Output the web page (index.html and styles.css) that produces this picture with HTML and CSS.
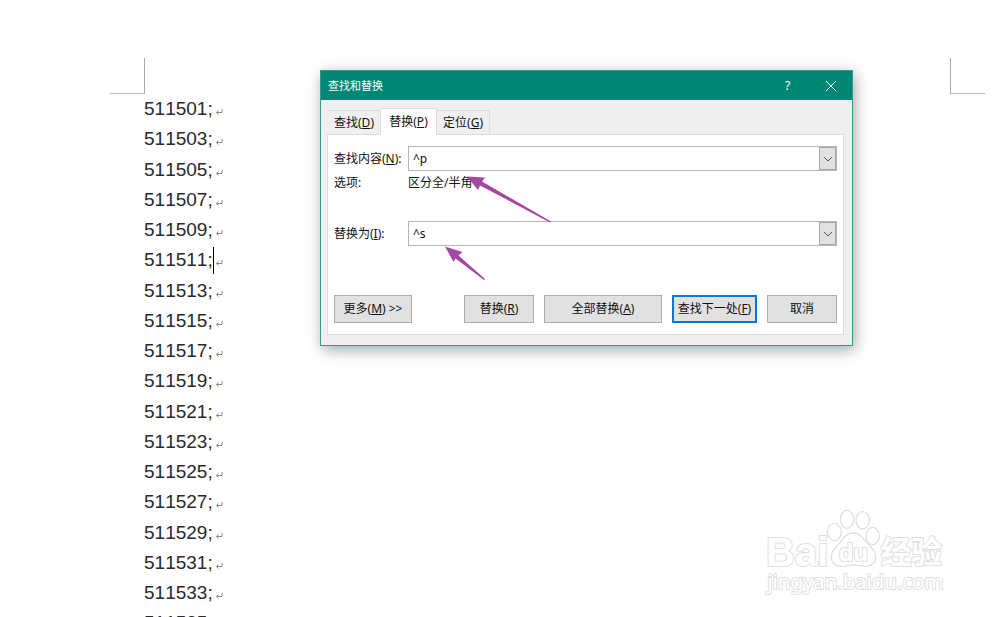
FILE: index.html
```html
<!DOCTYPE html>
<html lang="zh-CN">
<head>
    <meta charset="UTF-8">
    <meta name="viewport" content="width=device-width, initial-scale=1.0">
    <title>查找和替换</title>
    <link rel="stylesheet" href="styles.css">
</head>
<body>
    <main class="page">
        <div class="margins">
            <span class="corner corner-left"></span>
            <span class="corner corner-right"></span>
        </div>
        <div class="document" id="document"></div>
    </main>

    <section class="dialog" role="dialog" aria-labelledby="dialog-title">
        <header class="title-bar">
            <h1 id="dialog-title">查找和替换</h1>
            <button type="button" class="title-btn">?</button>
            <button type="button" class="title-btn" aria-label="关闭">
                <svg width="12" height="12" viewBox="0 0 12 12"><path d="M1 1l10 10M11 1L1 11"/></svg>
            </button>
        </header>
        <div class="dialog-body">
            <nav class="tabs">
                <button type="button" class="tab">查找(<u>D</u>)</button>
                <button type="button" class="tab active">替换(<u>P</u>)</button>
                <button type="button" class="tab">定位(<u>G</u>)</button>
            </nav>
            <form class="panel">
                <div class="row">
                    <label for="find">查找内容(<u>N</u>):</label>
                    <div class="combo">
                        <input type="text" id="find" value="^p">
                        <button type="button" aria-label="查找记录">
                            <svg width="10" height="6" viewBox="0 0 10 6"><path d="M1 1l4 4 4-4"/></svg>
                        </button>
                    </div>
                </div>
                <div class="row options">
                    <span>选项:</span>
                    <span>区分全/半角</span>
                </div>
                <div class="row">
                    <label for="replace">替换为(<u>I</u>):</label>
                    <div class="combo">
                        <input type="text" id="replace" value="^s">
                        <button type="button" aria-label="替换记录">
                            <svg width="10" height="6" viewBox="0 0 10 6"><path d="M1 1l4 4 4-4"/></svg>
                        </button>
                    </div>
                </div>
                <div class="actions">
                    <button type="button" class="btn btn-more">更多(<u>M</u>) &gt;&gt;</button>
                    <button type="button" class="btn">替换(<u>R</u>)</button>
                    <button type="button" class="btn btn-wide">全部替换(<u>A</u>)</button>
                    <button type="button" class="btn btn-default">查找下一处(<u>F</u>)</button>
                    <button type="button" class="btn">取消</button>
                </div>
            </form>
        </div>
        <svg class="arrows" width="533" height="275" viewBox="320 71 533 275">
            <path d="M467 176.500L485 177.500L482 181.500L551 221.500L550 222.500L480 185.500L478 190Z"/>
            <path d="M445 246.500L462.500 252L458.500 255.500L485 279L484 280L455.500 258.500L453.500 262Z"/>
        </svg>
    </section>

    <svg class="watermark" width="220" height="110" viewBox="0 0 660 330">
        <ellipse cx="253" cy="111" rx="21" ry="26"/>
        <ellipse cx="291" cy="73" rx="20" ry="27"/>
        <ellipse cx="338" cy="76" rx="20" ry="26"/>
        <ellipse cx="368" cy="123" rx="20" ry="26"/>
        <path d="M310 114C290 114 282 128 270 143C256 158 244 168 244 186C244 204 256 214 274 214C288 214 296 210 310 210C324 210 334 214 346 214C364 214 377 204 377 186C377 168 364 158 350 143C338 128 330 114 310 114Z"/>
        <text class="wm-bai" x="48" y="212">Bai</text>
        <text class="wm-du" x="266" y="198">du</text>
        <text class="wm-cn" x="392" y="203">经验</text>
        <text class="wm-url" x="52" y="283">jingyan.baidu.com</text>
    </svg>

    <script>
const doc = document.getElementById("document");

// Odd codes from 511501 on, the caret stands after 511511
for (let code = 511501; code <= 511535; code += 2) {
    const line = document.createElement("p");
    line.textContent = code + ";";
    if (code === 511511) {
        line.insertAdjacentHTML("beforeend", '<span class="caret"></span>');
    }
    line.insertAdjacentHTML("beforeend", '<svg class="mark" width="8" height="8" viewBox="0 0 8 8"><path d="M7 1v3.500H1.500M3.500 2.500L1.500 4.500L3.500 6.500"/></svg>');
    doc.appendChild(line);
}
    </script>
</body>
</html>
```
FILE: styles.css
```css
* {
    margin: 0;
    padding: 0;
    box-sizing: border-box;
}

body {
    position: relative;
    height: 100vh;
    overflow: hidden;
    background-color: #fff;
    font-family: "Noto Sans", "Noto Sans CJK SC", sans-serif;
    font-size: 12px;
    line-height: 16px;
    color: #111;
}

button,
input {
    font: inherit;
    color: inherit;
}

.page {
    padding: 58px 15px 0 110px;
}

.margins {
    display: flex;
    justify-content: space-between;
}

.corner {
    width: 35px;
    height: 36px;
    border-bottom: 1px solid #bbb;
}

.corner-left {
    border-right: 1px solid #aaa;
}

.corner-right {
    border-left: 1px solid #aaa;
}

.document {
    padding-left: 34px;
    font-family: "Liberation Sans", Arial, sans-serif;
    font-size: 19px;
    font-kerning: none;
    line-height: 30px;
    color: #2a2a2a;
}

.document p {
    display: flex;
    align-items: center;
    height: 30px;
}

.document p:nth-child(4n + 2) {
    margin-bottom: 1px;
}

.caret {
    width: 1px;
    height: 27px;
    margin-right: -1px;
    background-color: #000;
}

.mark {
    margin: 5px 0 0 2px;
    fill: none;
    stroke: #888;
}

.dialog {
    position: absolute;
    top: 70px;
    left: 320px;
    width: 533px;
    border: 1px solid #33998a;
    background-color: #efefef;
    box-shadow: 2px 4px 14px rgba(0, 0, 0, 0.35);
}

.title-bar {
    display: flex;
    align-items: center;
    height: 29px;
    padding-left: 7px;
    background-color: #008674;
    color: #fff;
}

.title-bar h1 {
    flex: 1;
    font-size: 11px;
    font-weight: normal;
}

.title-btn {
    width: 43px;
    height: 29px;
    border: none;
    background: none;
}

.title-btn svg {
    display: block;
    margin: 0 auto;
    fill: none;
    stroke: #fff;
}

.dialog-body {
    padding: 8px 8px 10px 6px;
}

.tabs {
    display: flex;
    align-items: flex-end;
    padding-left: 1px;
}

.tab {
    width: 53px;
    height: 24px;
    border: 1px solid #ddd;
    border-width: 1px 1px 0 0;
    background-color: #efefef;
}

.tab.active {
    width: 56px;
    height: 27px;
    margin-bottom: -1px;
    background-color: #fff;
}

.panel {
    padding: 11px 6px;
    border: 1px solid #ddd;
    background-color: #fff;
}

.row {
    display: grid;
    grid-template-columns: 74px 1fr;
    align-items: center;
}

.row label {
    white-space: nowrap;
}

.combo {
    display: flex;
    height: 25px;
    border: 1px solid #b4b4bb;
}

.combo input {
    flex: 1;
    min-width: 0;
    padding: 0 4px;
    border: none;
    outline: none;
}

.combo button {
    width: 17px;
    border: 1px solid #a8a8ad;
    background-color: #e1e1e1;
}

.combo svg {
    display: block;
    margin: 0 auto;
    fill: none;
    stroke: #555;
}

.options {
    height: 24px;
    margin-bottom: 26px;
}

.actions {
    display: flex;
    gap: 10px;
    padding-top: 49px;
}

.btn {
    width: 70px;
    height: 28px;
    border: 1px solid #adadad;
    background-color: #e1e1e1;
}

.btn-more {
    width: 78px;
    margin-right: auto;
}

.btn-wide {
    width: 118px;
}

.btn-default {
    width: 85px;
    border: 2px solid #0078d7;
}

.arrows {
    position: absolute;
    top: 0;
    left: -1px;
    fill: #a349a4;
    pointer-events: none;
}

.watermark {
    position: absolute;
    top: 495px;
    right: 30px;
    fill: #fff;
    stroke: #e0e0e0;
    stroke-width: 4px;
    pointer-events: none;
}

.watermark text {
    font-family: "Liberation Sans", "Noto Sans CJK SC", sans-serif;
    font-weight: bold;
    stroke-width: 6px;
    paint-order: stroke;
}

.watermark .wm-bai {
    font-size: 120px;
}

.watermark .wm-du {
    font-size: 72px;
}

.watermark .wm-cn {
    font-size: 92px;
}

.watermark .wm-url {
    font-family: "Noto Sans", sans-serif;
    font-size: 61px;
    font-weight: normal;
}
```
